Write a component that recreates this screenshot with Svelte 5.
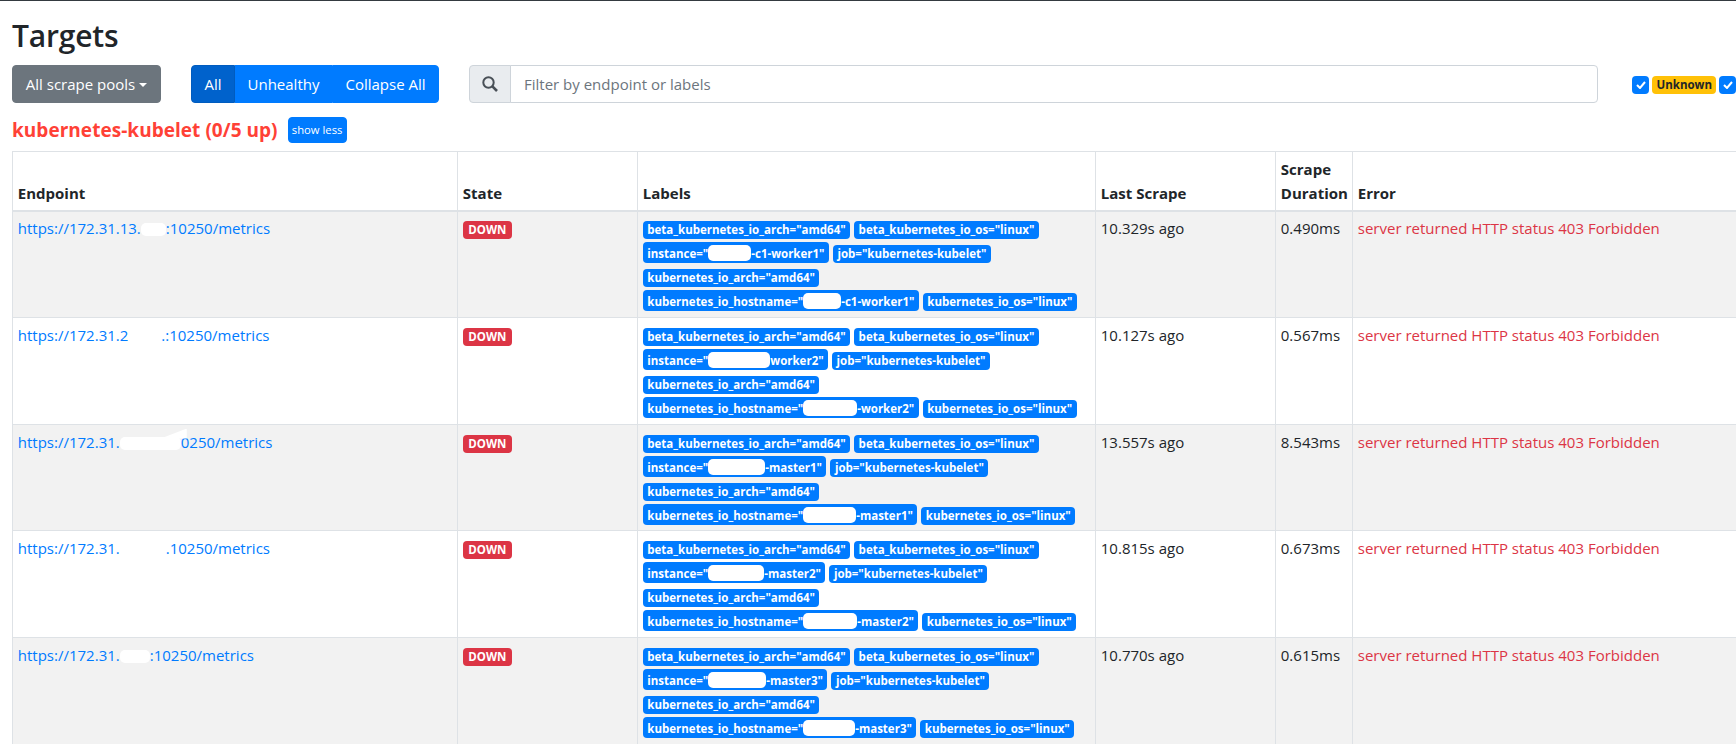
<script>
	const rows = [
		{ pre: "https://172.31.13.", gap: 25, post: ":10250/metrics", inst: 43, host: 38, suffix: "-c1-worker1", scrape: "10.329s ago", dur: "0.490ms" },
		{ pre: "https://172.31.2", gap: 33, post: ".:10250/metrics", inst: 62, host: 54, suffix: "-worker2", instSuffix: "worker2", scrape: "10.127s ago", dur: "0.567ms" },
		{ pre: "https://172.31.", gap: 61, post: "0250/metrics", inst: 57, host: 53, suffix: "-master1", scrape: "13.557s ago", dur: "8.543ms", tail: true },
		{ pre: "https://172.31.", gap: 46, post: ".10250/metrics", inst: 56, host: 54, suffix: "-master2", scrape: "10.815s ago", dur: "0.673ms" },
		{ pre: "https://172.31.", gap: 30, post: ":10250/metrics", inst: 58, host: 52, suffix: "-master3", scrape: "10.770s ago", dur: "0.615ms" }
	];
</script>

<div class="page">
	<h2>Targets</h2>

	<div class="toolbar">
		<button class="btn grey">All scrape pools<span class="caret"></span></button>
		<div class="group">
			<button class="btn active">All</button>
			<button class="btn">Unhealthy</button>
			<button class="btn">Collapse All</button>
		</div>
		<div class="search">
			<span class="search-icon">
				<svg width="16" height="16" viewBox="0 0 16 16" fill="none" stroke="#495057" stroke-width="2">
					<circle cx="6.5" cy="6.5" r="5.2" />
					<path d="M10.4 10.4 15 15" stroke-width="2.6" />
				</svg>
			</span>
			<input placeholder="Filter by endpoint or labels" />
		</div>
		<div class="filters">
			<span class="check"><svg width="10" height="8" viewBox="0 0 10 8"><path d="M1 4l3 3 5-6" fill="none" stroke="#fff" stroke-width="2" /></svg></span>
			<span class="badge unknown">Unknown</span>
			<span class="check"><svg width="10" height="8" viewBox="0 0 10 8"><path d="M1 4l3 3 5-6" fill="none" stroke="#fff" stroke-width="2" /></svg></span>
		</div>
	</div>

	<div class="pool">
		<a class="pool-name" href="#pool">kubernetes-kubelet (0/5 up)</a>
		<button class="btn small">show less</button>
	</div>

	<table>
		<colgroup>
			<col style="width: 445px" />
			<col style="width: 180px" />
			<col style="width: 458px" />
			<col style="width: 180px" />
			<col style="width: 77px" />
			<col />
		</colgroup>
		<thead>
			<tr>
				<th>Endpoint</th>
				<th>State</th>
				<th>Labels</th>
				<th>Last Scrape</th>
				<th>Scrape Duration</th>
				<th>Error</th>
			</tr>
		</thead>
		<tbody>
			{#each rows as row}
				<tr>
					<td><a href="#target">{row.pre}<span class="redact url" class:tail={row.tail} style="width: {row.gap}px"></span>{row.post}</a></td>
					<td><span class="badge down">DOWN</span></td>
					<td>
						<span class="badge label">beta_kubernetes_io_arch="amd64"</span>
						<span class="badge label">beta_kubernetes_io_os="linux"</span>
						<span class="badge label">instance="<span class="redact" style="width: {row.inst}px"></span>{row.instSuffix ?? row.suffix}"</span>
						<span class="badge label">job="kubernetes-kubelet"</span>
						<span class="badge label">kubernetes_io_arch="amd64"</span>
						<span class="badge label">kubernetes_io_hostname="<span class="redact" style="width: {row.host}px"></span>{row.suffix}"</span>
						<span class="badge label">kubernetes_io_os="linux"</span>
					</td>
					<td>{row.scrape}</td>
					<td>{row.dur}</td>
					<td class="error">server returned HTTP status 403 Forbidden</td>
				</tr>
			{/each}
		</tbody>
	</table>
</div>

<style>
:global(html),
:global(body) {
	overflow: hidden;
	height: 744px;
	background: #fff;
}

.page {
	border-top: 1px solid #343a40;
	padding: 0 12px;
	font-family: "Open Sans", sans-serif;
	font-size: 15px;
	line-height: 24px;
	color: #212529;
	width: 1800px;
	box-sizing: border-box;
}

h2 {
	margin: 0;
	padding-top: 17px;
	height: 64px;
	box-sizing: border-box;
	font-size: 30px;
	line-height: 36px;
	font-weight: 600;
	letter-spacing: -0.2px;
}

.toolbar {
	display: flex;
	align-items: flex-start;
}

.btn {
	font: inherit;
	color: #fff;
	background: #007bff;
	border: 1px solid #007bff;
	border-radius: 4px;
	height: 38px;
	padding: 0 12px;
	white-space: nowrap;
}

.grey {
	width: 149px;
	padding: 0;
	background: #6c757d;
	border-color: #6c757d;
}

.caret {
	display: inline-block;
	margin-left: 4px;
	vertical-align: 3px;
	border-top: 4.8px solid #fff;
	border-left: 4.8px solid transparent;
	border-right: 4.8px solid transparent;
}

.group {
	display: flex;
	margin-left: 30px;
	width: 248px;
}

.group .btn {
	border-radius: 0;
}

.group .btn:first-child {
	width: 44px;
	padding: 0;
	border-radius: 4px 0 0 4px;
}

.group .btn:nth-child(2) {
	width: 97px;
	padding: 0;
}

.group .btn:last-child {
	width: 107px;
	padding: 0;
	border-radius: 0 4px 4px 0;
}

.group .active {
	background: #0062cc;
	border-color: #005cbf;
}

.search {
	display: flex;
	margin-left: 30px;
	width: 1129px;
	height: 38px;
}

.search-icon {
	display: flex;
	align-items: center;
	justify-content: center;
	width: 42px;
	box-sizing: border-box;
	background: #e9ecef;
	border: 1px solid #ced4da;
	border-radius: 4px 0 0 4px;
}

.search input {
	flex: 1;
	margin-left: -1px;
	padding: 0 13px;
	font: inherit;
	color: #495057;
	border: 1px solid #ced4da;
	border-radius: 0 4px 4px 0;
	outline: none;
}

.search input::placeholder {
	color: #6c757d;
	opacity: 1;
}

.filters {
	display: flex;
	align-items: center;
	gap: 3px;
	margin-left: 34px;
	margin-top: 11px;
}

.check {
	display: flex;
	align-items: center;
	justify-content: center;
	width: 17px;
	height: 18px;
	background: #007bff;
	border-radius: 4px;
}

.badge {
	display: inline-block;
	font-size: 11.5px;
	font-weight: 700;
	line-height: 12px;
	padding: 3px 4.5px;
	border-radius: 4px;
	white-space: nowrap;
	vertical-align: baseline;
}

.unknown {
	color: #212529;
	background: #ffc107;
}

.pool {
	display: flex;
	align-items: center;
	height: 26px;
	margin-top: 14px;
	margin-bottom: 8px;
}

.pool-name {
	font-size: 19px;
	font-weight: 700;
	color: #ff4136;
	text-decoration: none;
	letter-spacing: 0.04px;
}

.btn.small {
	height: 26px;
	width: 59px;
	padding: 0;
	margin-left: 10px;
	font-size: 11.25px;
	line-height: 18px;
}

table {
	width: 1740px;
	table-layout: fixed;
	border-collapse: collapse;
}

th,
td {
	padding: 4.8px;
	text-align: left;
	vertical-align: top;
	border: 1px solid #dee2e6;
}

th {
	vertical-align: bottom;
	font-weight: 700;
	border-bottom-width: 2px;
}

tbody tr:nth-child(odd) {
	background: #f2f2f2;
}

td a {
	color: #007bff;
	text-decoration: none;
}

.down {
	color: #fff;
	background: #dc3545;
	padding: 3px 5.5px;
}

.label {
	color: #fff;
	background: #007bff;
}

.redact {
	display: inline-block;
	height: 16px;
	margin-bottom: -3px;
	background: #fff;
	border-radius: 5px;
}

.redact.url {
	position: relative;
	height: 13px;
	margin-bottom: -2px;
}

.tail::after {
	content: "";
	position: absolute;
	right: -6px;
	bottom: 11px;
	width: 26px;
	height: 10px;
	background: #fff;
	clip-path: polygon(0 100%, 100% 0, 100% 100%);
}

.error {
	color: #dc3545;
}
</style>
